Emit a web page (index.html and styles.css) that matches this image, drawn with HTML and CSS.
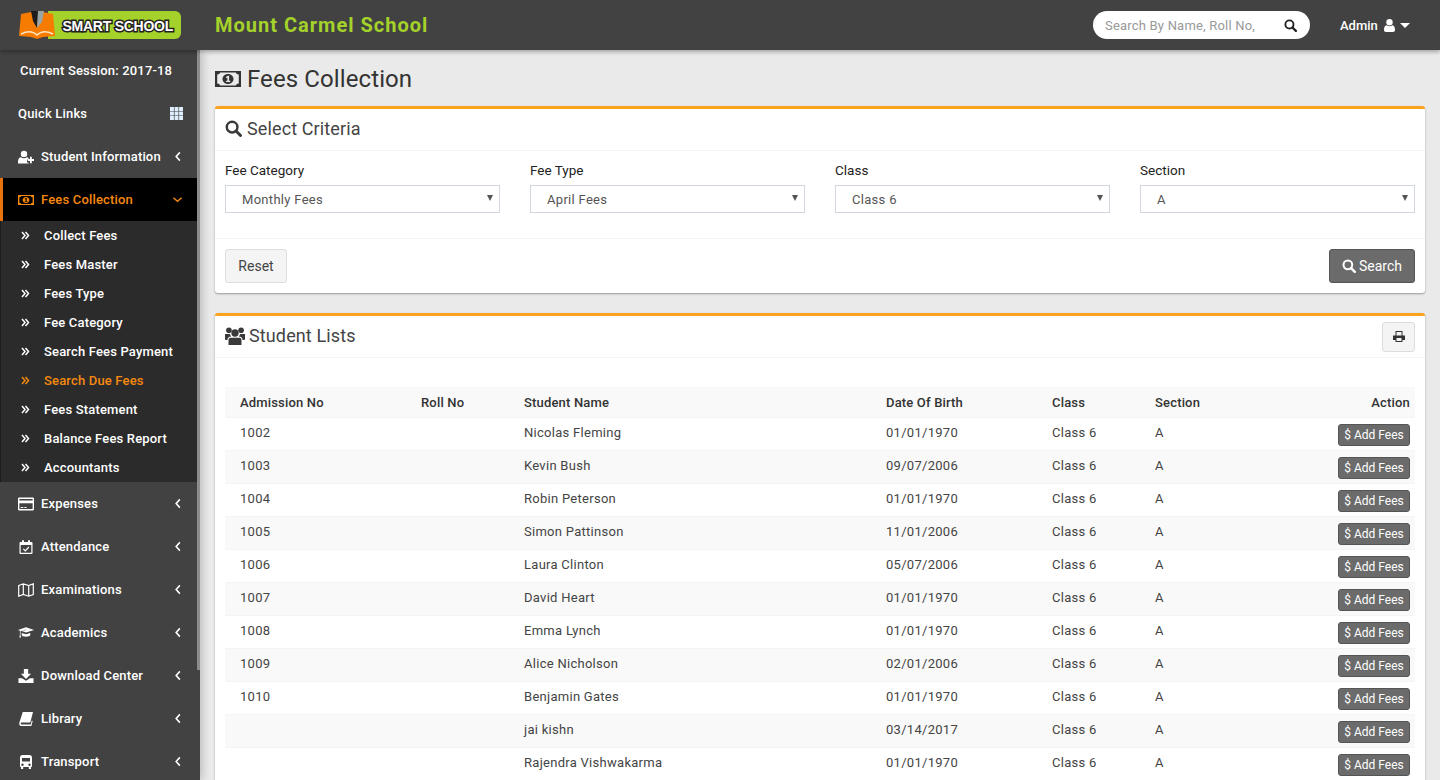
FILE: index.html
```html
<!DOCTYPE html>
<html lang="en">
<head>
  <meta charset="UTF-8">
  <title>Fees Collection</title>
  <link rel="stylesheet" href="styles.css">
</head>
<body>

  <!-- Shared icons -->
  <svg class="icon-defs" width="0" height="0">
    <symbol id="i-search" viewBox="0 0 16 16"><circle cx="6.7" cy="6.7" r="5" fill="none" stroke="currentColor" stroke-width="2.3"/><path d="M10.4 10.4l4.2 4.2" stroke="currentColor" stroke-width="2.8" stroke-linecap="round"/></symbol>
    <symbol id="i-money" viewBox="0 0 26 16"><path fill-rule="evenodd" fill="currentColor" d="M0 0h26v16H0zM2.2 3.5v9a3 3 0 0 1 3 2h15.6a3 3 0 0 1 3-2v-9a3 3 0 0 1-3-2H5.200a3 3 0 0 1-3 2zM13 3c3 0 5.500 2.200 5.500 5s-2.500 5-5.500 5-5.500-2.200-5.500-5S10 3 13 3zM12.800 4.800l-2 1.400.8 1 .8-.5v3h-1.300v1.300h4.200v-1.300h-1.200V4.800z"/></symbol>
    <symbol id="i-user-plus" viewBox="0 0 16 13"><circle cx="6" cy="3.400" r="3.200" fill="currentColor"/><path fill="currentColor" d="M0 13c-.2-4 .8-6 3-6.200 1.800 1.300 4.200 1.300 6 0 .6.100 1.100.3 1.500.7v1.600H9v3h1.500V13z"/><path fill="currentColor" d="M12 6.300h1.800v2.300H16v1.800h-2.200v2.300H12v-2.300H9.800V8.600H12z"/></symbol>
    <symbol id="i-left" viewBox="0 0 8 12"><path d="M6 1.500L2 6l4 4.500" fill="none" stroke="currentColor" stroke-width="1.700"/></symbol>
    <symbol id="i-down" viewBox="0 0 12 8"><path d="M1.500 1.500L6 5.500l4.500-4" fill="none" stroke="currentColor" stroke-width="1.500"/></symbol>
    <symbol id="i-dbl" viewBox="0 0 9 9"><path d="M1 1l3 3.500L1 8M4.500 1l3 3.500-3 3.500" fill="none" stroke="currentColor" stroke-width="1.500"/></symbol>
    <symbol id="i-grid" viewBox="0 0 13 13"><path fill="currentColor" d="M0 0h3.900v3.900H0zM4.550 0h3.900v3.900h-3.900zM9.100 0H13v3.900H9.100zM0 4.550h3.900v3.900H0zM4.550 4.550h3.900v3.900h-3.900zM9.100 4.550H13v3.900H9.100zM0 9.100h3.900V13H0zM4.550 9.100h3.900V13h-3.900zM9.100 9.100H13V13H9.100z"/></symbol>
    <symbol id="i-card" viewBox="0 0 15 12"><path fill-rule="evenodd" fill="currentColor" d="M1 0h13a1 1 0 0 1 1 1v10a1 1 0 0 1-1 1H1a1 1 0 0 1-1-1V1a1 1 0 0 1 1-1zM1.300 1.300v1.500h12.400V1.300zM1.300 5.300v5.400h12.400V5.300zM2.500 8.800h2.500v1H2.500zM6 8.800h2v1H6z"/></symbol>
    <symbol id="i-calendar" viewBox="0 0 13 14"><path fill-rule="evenodd" fill="currentColor" d="M1 2h1.500V.3h2V2h4V.3h2V2H12a1 1 0 0 1 1 1v10a1 1 0 0 1-1 1H1a1 1 0 0 1-1-1V3a1 1 0 0 1 1-1zM1.200 5v7.800h10.600V5z"/><path d="M3.800 8.800l2 2 3.600-3.800" fill="none" stroke="currentColor" stroke-width="1.200"/></symbol>
    <symbol id="i-map" viewBox="0 0 16 14"><path d="M.7 2.500L5.300.8l5.400 1.700L15.300.8v10.700l-4.600 1.700-5.400-1.700-4.600 1.700zM5.300.8v10.700M10.700 2.500v10.700" fill="none" stroke="currentColor" stroke-width="1.200"/></symbol>
    <symbol id="i-cap" viewBox="0 0 18 13"><path fill="currentColor" d="M9 0l9 3-9 3-5-1.700L9.300 3 9 2.600 2.800 4.500v4.200l.7 2.800H1.500l.6-2.800V4L0 3z"/><path fill="currentColor" d="M4.200 6.500L9 8l4.800-1.500v2.300c0 1-2.200 2-4.800 2s-4.800-1-4.800-2z"/></symbol>
    <symbol id="i-download" viewBox="0 0 14 13"><path fill="currentColor" d="M5 0h4v4.500h2.700L7 9.200 2.300 4.500H5zM0 8.500h3.300L7 11l3.700-2.500H14V13H0z"/></symbol>
    <symbol id="i-book" viewBox="0 0 13 13"><path fill="currentColor" d="M3.500 0H13l-2.500 9.800H2.200C1.500 9.800 1.300 11.500 2.200 11.500h8.700l1-3.500.8.400-1.200 4.600H2C.5 13 0 11.500.3 10z"/></symbol>
    <symbol id="i-bus" viewBox="0 0 12 14"><path fill-rule="evenodd" fill="currentColor" d="M2.500 0h7C11 0 12 1 12 2.500V11c0 .6-.3 1-1 1v2H8.800v-2H3.200v2H1v-2c-.7 0-1-.4-1-1V2.500C0 1 1 0 2.500 0zM2 3v3.500h8V3zM2.500 8.500a1.200 1.200 0 1 0 0 2.400 1.200 1.200 0 0 0 0-2.400zM9.500 8.500a1.200 1.200 0 1 0 0 2.400 1.200 1.200 0 0 0 0-2.400z"/></symbol>
    <symbol id="i-users" viewBox="0 0 20 18"><circle cx="10" cy="6" r="3.700" fill="currentColor"/><circle cx="3.900" cy="3.200" r="2.800" fill="currentColor"/><circle cx="16.100" cy="3.200" r="2.800" fill="currentColor"/><path fill="currentColor" d="M5.500 10.800h9c1.200 0 2 1 2 2.400V18h-13v-4.800c0-1.400.8-2.400 2-2.400zM0 7h4.800c.3 1 .8 1.800 1.400 2.400-2.300.2-3.800 1.500-3.800 3.600H1c-.6 0-1-.5-1-1zM20 7h-4.800c-.3 1-.8 1.800-1.400 2.400 2.300.2 3.800 1.500 3.800 3.600H19c.6 0 1-.5 1-1z"/></symbol>
    <symbol id="i-print" viewBox="0 0 12 11"><path fill-rule="evenodd" fill="currentColor" d="M2.500 0h7v4.500H12V9H9.500v2h-7V9H0V4.500h2.500zM3.500 1v3.500h5V1zM3.500 7v3h5V7z"/></symbol>
    <symbol id="i-user" viewBox="0 0 11 13"><circle cx="5.500" cy="3.300" r="3.200" fill="currentColor"/><path fill="currentColor" d="M2.500 6.300c1.700 1.200 4.300 1.200 6 0 1.700.2 2.500 2 2.500 4.700 0 1.300-.8 2-2 2H2c-1.200 0-2-.7-2-2 0-2.700.8-4.500 2.500-4.700z"/></symbol>
  </svg>

  <header class="topbar">
    <div class="logo">
      <svg width="164" height="30" viewBox="0 0 164 30">
        <path d="M30 1h127a6 6 0 0 1 6 6v16a6 6 0 0 1-6 6H30z" fill="#a5d22a"/>
        <path d="M3 4l10-2 6 10 6-10 10 2 2 22-12 1-6 2-6-2-12-1z" fill="#f57c00"/>
        <path d="M3 24c6-3 12-3 16 1 4-4 10-4 16-1" fill="none" stroke="#ffe3bd" stroke-width="1.500"/>
        <path d="M13 1h7l-1 17-4-7z" fill="#1c1c1c"/>
        <path d="M20 1h6l-2 11-5 6z" fill="#9aa5a5"/>
        <text class="logo-text" x="44.500" y="20.500">SMART SCHOOL</text>
      </svg>
    </div>
    <div class="school-name">Mount Carmel School</div>
    <form class="top-search">
      <input type="text" placeholder="Search By Name, Roll No,">
      <svg class="top-search-icon"><use href="#i-search"/></svg>
    </form>
    <div class="admin">
      Admin
      <svg class="admin-user"><use href="#i-user"/></svg>
      <span class="admin-caret"></span>
    </div>
  </header>

  <div class="layout">
    <aside class="sidebar">
      <div class="session">Current Session: 2017-18</div>
      <div class="quick-links">Quick Links <svg class="grid-icon"><use href="#i-grid"/></svg></div>

      <a class="nav-item"><svg class="nav-icon"><use href="#i-user-plus"/></svg>Student Information<svg class="nav-arrow"><use href="#i-left"/></svg></a>

      <a class="nav-item active"><svg class="nav-icon"><use href="#i-money"/></svg>Fees Collection<svg class="nav-arrow-down"><use href="#i-down"/></svg></a>
      <ul class="submenu">
        <li><svg class="sub-icon"><use href="#i-dbl"/></svg>Collect Fees</li>
        <li><svg class="sub-icon"><use href="#i-dbl"/></svg>Fees Master</li>
        <li><svg class="sub-icon"><use href="#i-dbl"/></svg>Fees Type</li>
        <li><svg class="sub-icon"><use href="#i-dbl"/></svg>Fee Category</li>
        <li><svg class="sub-icon"><use href="#i-dbl"/></svg>Search Fees Payment</li>
        <li class="current"><svg class="sub-icon"><use href="#i-dbl"/></svg>Search Due Fees</li>
        <li><svg class="sub-icon"><use href="#i-dbl"/></svg>Fees Statement</li>
        <li><svg class="sub-icon"><use href="#i-dbl"/></svg>Balance Fees Report</li>
        <li><svg class="sub-icon"><use href="#i-dbl"/></svg>Accountants</li>
      </ul>

      <a class="nav-item"><svg class="nav-icon"><use href="#i-card"/></svg>Expenses<svg class="nav-arrow"><use href="#i-left"/></svg></a>
      <a class="nav-item"><svg class="nav-icon"><use href="#i-calendar"/></svg>Attendance<svg class="nav-arrow"><use href="#i-left"/></svg></a>
      <a class="nav-item"><svg class="nav-icon"><use href="#i-map"/></svg>Examinations<svg class="nav-arrow"><use href="#i-left"/></svg></a>
      <a class="nav-item"><svg class="nav-icon"><use href="#i-cap"/></svg>Academics<svg class="nav-arrow"><use href="#i-left"/></svg></a>
      <a class="nav-item"><svg class="nav-icon"><use href="#i-download"/></svg>Download Center<svg class="nav-arrow"><use href="#i-left"/></svg></a>
      <a class="nav-item"><svg class="nav-icon"><use href="#i-book"/></svg>Library<svg class="nav-arrow"><use href="#i-left"/></svg></a>
      <a class="nav-item"><svg class="nav-icon"><use href="#i-bus"/></svg>Transport<svg class="nav-arrow"><use href="#i-left"/></svg></a>

      <div class="side-scroll"></div>
    </aside>

    <main class="content">
      <h1 class="page-title"><svg class="title-icon"><use href="#i-money"/></svg>Fees Collection</h1>

      <section class="box">
        <div class="box-header">
          <h3><svg class="box-icon"><use href="#i-search"/></svg>Select Criteria</h3>
        </div>
        <div class="criteria">
          <div class="field">
            <label>Fee Category</label>
            <div class="select-wrap"><select><option>Monthly Fees</option></select></div>
          </div>
          <div class="field">
            <label>Fee Type</label>
            <div class="select-wrap"><select><option>April Fees</option></select></div>
          </div>
          <div class="field">
            <label>Class</label>
            <div class="select-wrap"><select><option>Class 6</option></select></div>
          </div>
          <div class="field">
            <label>Section</label>
            <div class="select-wrap"><select><option>A</option></select></div>
          </div>
        </div>
        <div class="box-footer">
          <button type="button" class="btn-reset">Reset</button>
          <button type="button" class="btn-search"><svg class="btn-search-icon"><use href="#i-search"/></svg>Search</button>
        </div>
      </section>

      <section class="box">
        <div class="box-header list-header">
          <h3><svg class="users-icon"><use href="#i-users"/></svg>Student Lists</h3>
          <button type="button" class="btn-print"><svg class="print-icon"><use href="#i-print"/></svg></button>
        </div>
        <div class="box-body">
          <table class="students">
            <colgroup>
              <col class="c-adm"><col class="c-roll"><col class="c-name"><col class="c-dob"><col class="c-class"><col class="c-sec"><col class="c-act">
            </colgroup>
            <thead>
              <tr><th>Admission No</th><th>Roll No</th><th>Student Name</th><th>Date Of Birth</th><th>Class</th><th>Section</th><th class="right">Action</th></tr>
            </thead>
            <tbody id="rows"></tbody>
          </table>
        </div>
      </section>
    </main>
  </div>

  <script>
    // Student rows
    const students = [
      ['1002', 'Nicolas Fleming', '01/01/1970'],
      ['1003', 'Kevin Bush', '09/07/2006'],
      ['1004', 'Robin Peterson', '01/01/1970'],
      ['1005', 'Simon Pattinson', '11/01/2006'],
      ['1006', 'Laura Clinton', '05/07/2006'],
      ['1007', 'David Heart', '01/01/1970'],
      ['1008', 'Emma Lynch', '01/01/1970'],
      ['1009', 'Alice Nicholson', '02/01/2006'],
      ['1010', 'Benjamin Gates', '01/01/1970'],
      ['', 'jai kishn', '03/14/2017'],
      ['', 'Rajendra Vishwakarma', '01/01/1970'],
    ];

    document.getElementById('rows').innerHTML = students.map(s => `
      <tr>
        <td>${s[0]}</td><td></td><td>${s[1]}</td><td>${s[2]}</td><td>Class 6</td><td>A</td>
        <td class="right"><button type="button" class="btn-add">$ Add Fees</button></td>
      </tr>`).join('');
  </script>
</body>
</html>
```

FILE: styles.css
```css
* {
  box-sizing: border-box;
}
html, body {
  height: 100%;
  margin: 0;
  overflow: hidden;
}
body {
  font-family: Roboto, "Liberation Sans", sans-serif;
  font-size: 13px;
  color: #333;
  background: #eaeaea;
}
.icon-defs {
  position: absolute;
}

/* Top bar */
.topbar {
  position: relative;
  z-index: 3;
  display: flex;
  align-items: center;
  height: 50px;
  background: #424242;
  box-shadow: 0 2px 4px rgba(0, 0, 0, 0.3);
}
.logo {
  display: flex;
  width: 215px;
  padding-left: 18px;
}
.logo svg {
  display: block;
}
.logo-text {
  font-family: "Liberation Sans", sans-serif;
  font-weight: bold;
  font-size: 14px;
  letter-spacing: -0.25px;
  fill: #fff;
  stroke: #222;
  stroke-width: 3px;
  paint-order: stroke;
}
.school-name {
  font-size: 20px;
  font-weight: 700;
  color: #a5d22a;
  letter-spacing: 1px;
}
.top-search {
  display: flex;
  align-items: center;
  width: 217px;
  height: 28px;
  margin-left: auto;
  padding: 0 13px 0 12px;
  background: #fff;
  border-radius: 14px;
}
.top-search input {
  flex: 1;
  min-width: 0;
  padding: 0;
  border: 0;
  outline: 0;
  font: 13px Roboto, sans-serif;
  letter-spacing: 0.2px;
}
.top-search input::placeholder {
  color: #999;
  opacity: 1;
}
.top-search-icon {
  width: 13px;
  height: 13px;
  color: #222;
}
.admin {
  display: flex;
  align-items: center;
  width: 130px;
  padding-left: 30px;
  color: #fff;
  font-size: 13px;
  font-weight: 500;
}
.admin-user {
  width: 11px;
  height: 13px;
  margin-left: 6px;
}
.admin-caret {
  width: 0;
  height: 0;
  margin-left: 5px;
  border-top: 5px solid #fff;
  border-left: 5px solid transparent;
  border-right: 5px solid transparent;
}

/* Layout */
.layout {
  display: flex;
  height: 730px;
}

/* Sidebar */
.sidebar {
  position: relative;
  z-index: 2;
  flex: none;
  width: 200px;
  background: #424242;
  color: #fff;
  box-shadow: 3px 0 8px rgba(0, 0, 0, 0.18);
  font-weight: 500;
  letter-spacing: 0.17px;
}
.session {
  height: 42px;
  padding: 13px 0 0 20px;
  line-height: 15px;
}
.quick-links {
  display: flex;
  align-items: center;
  justify-content: space-between;
  height: 43px;
  padding: 0 17px 0 18px;
}
.grid-icon {
  width: 13px;
  height: 13px;
  color: #dfeeff;
}
.nav-item {
  display: flex;
  align-items: center;
  height: 43px;
  padding-left: 18px;
}
.nav-item.active {
  padding-left: 15px;
  background: #000;
  border-left: 3px solid #e8730c;
  color: #f5890f;
}
.nav-icon {
  flex: none;
  width: 16px;
  height: 14px;
  margin-right: 7px;
}
.nav-arrow {
  width: 8px;
  height: 11px;
  margin-left: auto;
  margin-right: 18px;
}
.nav-arrow-down {
  width: 11px;
  height: 8px;
  margin-left: auto;
  margin-right: 17px;
}
.submenu {
  margin: 0;
  padding: 0;
  list-style: none;
  background: #2b2b2b;
  border-left: 1px solid #1c1c1c;
}
.submenu li {
  display: flex;
  align-items: center;
  height: 29px;
  padding-left: 20px;
}
.submenu li.current {
  color: #f5890f;
}
.sub-icon {
  width: 9px;
  height: 9px;
  margin-right: 14px;
}
.side-scroll {
  position: absolute;
  top: 0;
  right: 0;
  width: 3px;
  height: 620px;
  background: #8c8c8c;
}

/* Content */
.content {
  flex: 1;
  min-width: 0;
  padding: 0 15px;
  overflow: hidden;
}
.page-title {
  display: flex;
  align-items: center;
  height: 56px;
  margin: 0;
  padding-top: 2px;
  font-size: 24px;
  font-weight: 400;
  letter-spacing: 0.1px;
  color: #333;
}
.title-icon {
  width: 26px;
  height: 16px;
  margin-right: 6px;
}
.box {
  margin-bottom: 20px;
  background: #fff;
  border-top: 3px solid #faa21c;
  border-radius: 3px;
  box-shadow: 0 1px 2px rgba(0, 0, 0, 0.35);
}
.box-header {
  height: 42px;
  padding: 0 10px;
  border-bottom: 1px solid #f4f4f4;
}
.box-header h3 {
  display: flex;
  align-items: center;
  height: 39px;
  margin: 0;
  font-size: 18px;
  font-weight: 400;
  letter-spacing: 0.12px;
  color: #444;
}
.box-icon {
  width: 17px;
  height: 17px;
  margin-right: 5px;
  color: #3a3a3a;
}
.criteria {
  display: grid;
  grid-template-columns: repeat(4, 275px);
  gap: 30px;
  height: 87px;
  padding: 10px 10px 0;
}
.field label {
  display: block;
  height: 24px;
  line-height: 18px;
  font-size: 13.5px;
  color: #222;
}
.select-wrap {
  position: relative;
}
.select-wrap::after {
  content: "";
  position: absolute;
  top: 10px;
  right: 7px;
  border-top: 6px solid #555;
  border-left: 3px solid transparent;
  border-right: 3px solid transparent;
}
.select-wrap select {
  display: block;
  width: 100%;
  height: 28px;
  padding: 0 0 0 16px;
  appearance: none;
  background: #fff;
  border: 1px solid #d2d6de;
  border-radius: 0;
  font: 13px Roboto, sans-serif;
  letter-spacing: 0.3px;
  color: #555;
}
.box-footer {
  display: flex;
  justify-content: space-between;
  height: 55px;
  padding: 10px;
  border-top: 1px solid #f4f4f4;
}
.btn-reset {
  width: 62px;
  height: 34px;
  padding: 0;
  background: #f4f4f4;
  border: 1px solid #ddd;
  border-radius: 3px;
  font: 14px Roboto, sans-serif;
  color: #444;
}
.btn-search {
  display: flex;
  align-items: center;
  justify-content: center;
  width: 86px;
  height: 34px;
  padding: 0;
  background: #6b6b6b;
  border: 1px solid #555;
  border-radius: 3px;
  font: 14px Roboto, sans-serif;
  color: #fff;
}
.btn-search-icon {
  width: 14px;
  height: 14px;
  margin-right: 3px;
}
.list-header {
  display: flex;
  align-items: center;
  justify-content: space-between;
}
.list-header h3 {
  align-self: flex-start;
}
.users-icon {
  width: 20px;
  height: 18px;
  margin-right: 4px;
  color: #3a3a3a;
}
.btn-print {
  display: flex;
  align-items: center;
  justify-content: center;
  width: 33px;
  height: 30px;
  padding: 0;
  background: #f4f4f4;
  border: 1px solid #ddd;
  border-radius: 3px;
}
.print-icon {
  width: 12px;
  height: 11px;
  color: #333;
}
.box-body {
  padding: 29px 10px 10px;
}

/* Table */
.students {
  width: 100%;
  table-layout: fixed;
  border-collapse: collapse;
}
.c-adm { width: 181px; }
.c-roll { width: 103px; }
.c-name { width: 362px; }
.c-dob { width: 166px; }
.c-class { width: 103px; }
.c-sec { width: 100px; }
.students th {
  height: 30px;
  padding: 1px 5px 0 15px;
  background: #f9f9f9;
  text-align: left;
  font-size: 13px;
  font-weight: 500;
  letter-spacing: 0.17px;
  color: #333;
}
.students td {
  height: 33px;
  padding: 7px 5px 0 15px;
  vertical-align: top;
  border-top: 1px solid #f4f4f4;
  line-height: 16px;
  letter-spacing: 0.28px;
  color: #444;
}
.students tbody tr:nth-child(even) {
  background: #f9f9f9;
}
.students .right {
  text-align: right;
}
.btn-add {
  display: block;
  width: 72px;
  height: 22px;
  margin: -1px 0 0 auto;
  padding: 0;
  background: #6b6b6b;
  border: 1px solid #555;
  border-radius: 3px;
  font: 12px Roboto, sans-serif;
  letter-spacing: 0;
  color: #fff;
}
```
